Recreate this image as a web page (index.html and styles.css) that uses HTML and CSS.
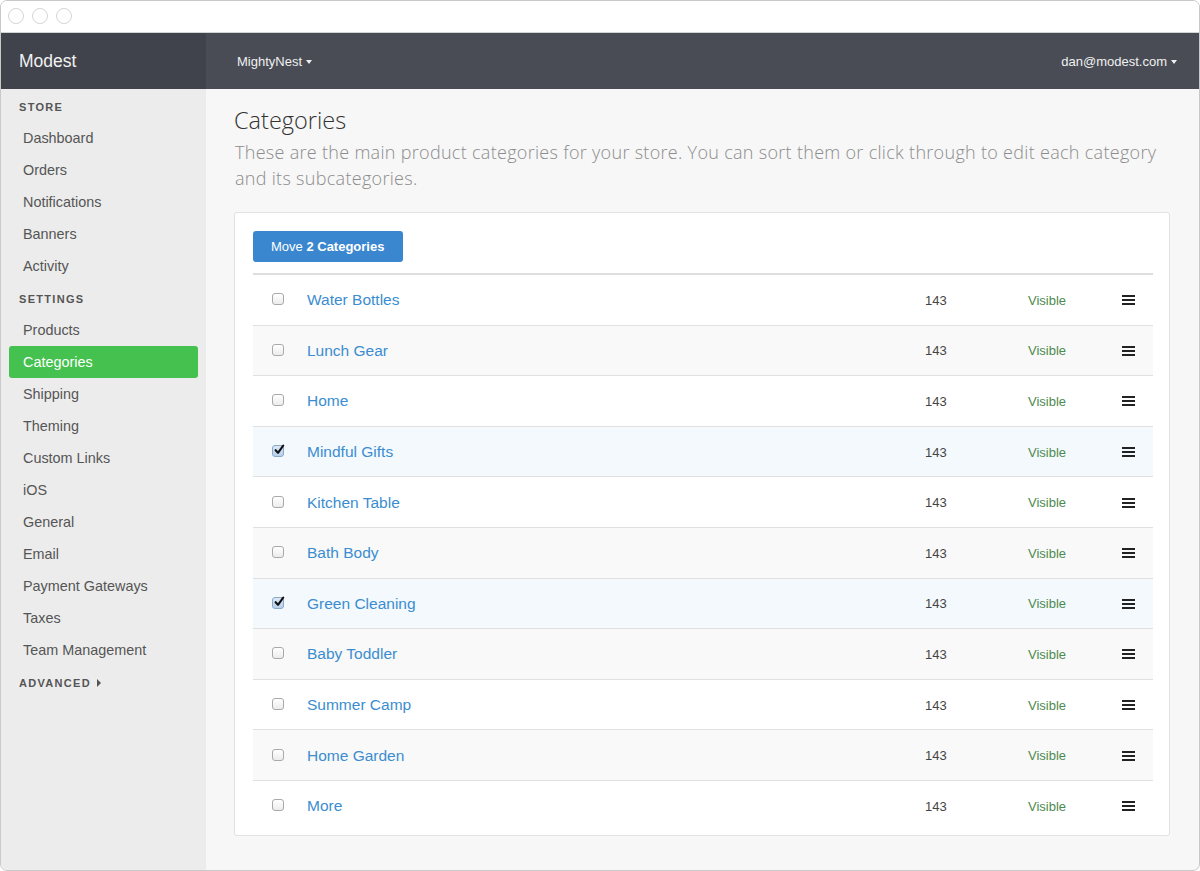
FILE: index.html
```html
<!DOCTYPE html>
<html>
<head>
<meta charset="utf-8">
<link rel="stylesheet" href="styles.css">
</head>
<body>
<div class="window">
  <div class="titlebar">
    <span class="light"></span><span class="light"></span><span class="light"></span>
  </div>
  <div class="topbar">
    <div class="brand">Modest</div>
    <div class="topnav">
      <div class="menu">MightyNest <span class="caret"></span></div>
      <div class="menu">dan@modest.com <span class="caret"></span></div>
    </div>
  </div>
  <div class="body">
    <nav class="sidebar">
      <div class="sec">STORE</div>
      <a class="item">Dashboard</a>
      <a class="item">Orders</a>
      <a class="item">Notifications</a>
      <a class="item">Banners</a>
      <a class="item">Activity</a>
      <div class="sec">SETTINGS</div>
      <a class="item">Products</a>
      <a class="item active">Categories</a>
      <a class="item">Shipping</a>
      <a class="item">Theming</a>
      <a class="item">Custom Links</a>
      <a class="item">iOS</a>
      <a class="item">General</a>
      <a class="item">Email</a>
      <a class="item">Payment Gateways</a>
      <a class="item">Taxes</a>
      <a class="item">Team Management</a>
      <div class="sec">ADVANCED <span class="rcaret"></span></div>
    </nav>
    <main class="main">
      <h1 class="title">Categories</h1>
      <p class="lead">These are the main product categories for your store. You can sort them or click through to edit each category and its subcategories.</p>
      <div class="card">
        <button class="btn">Move <b>2 Categories</b></button>
        <div class="table">
          <div class="row"><span class="cb"></span><a class="name">Water Bottles</a><span class="num">143</span><span class="vis">Visible</span><span class="ham"><i></i><i></i><i></i></span></div>
          <div class="row"><span class="cb"></span><a class="name">Lunch Gear</a><span class="num">143</span><span class="vis">Visible</span><span class="ham"><i></i><i></i><i></i></span></div>
          <div class="row"><span class="cb"></span><a class="name">Home</a><span class="num">143</span><span class="vis">Visible</span><span class="ham"><i></i><i></i><i></i></span></div>
          <div class="row sel"><span class="cb on"><svg viewBox="0 0 12 12" width="12" height="12"><path d="M2.6 6.2 L5 8.8 L10.2 1.6" fill="none" stroke="#111" stroke-width="2.1" stroke-linecap="round" stroke-linejoin="round"/></svg></span><a class="name">Mindful Gifts</a><span class="num">143</span><span class="vis">Visible</span><span class="ham"><i></i><i></i><i></i></span></div>
          <div class="row"><span class="cb"></span><a class="name">Kitchen Table</a><span class="num">143</span><span class="vis">Visible</span><span class="ham"><i></i><i></i><i></i></span></div>
          <div class="row"><span class="cb"></span><a class="name">Bath Body</a><span class="num">143</span><span class="vis">Visible</span><span class="ham"><i></i><i></i><i></i></span></div>
          <div class="row sel"><span class="cb on"><svg viewBox="0 0 12 12" width="12" height="12"><path d="M2.6 6.2 L5 8.8 L10.2 1.6" fill="none" stroke="#111" stroke-width="2.1" stroke-linecap="round" stroke-linejoin="round"/></svg></span><a class="name">Green Cleaning</a><span class="num">143</span><span class="vis">Visible</span><span class="ham"><i></i><i></i><i></i></span></div>
          <div class="row"><span class="cb"></span><a class="name">Baby Toddler</a><span class="num">143</span><span class="vis">Visible</span><span class="ham"><i></i><i></i><i></i></span></div>
          <div class="row"><span class="cb"></span><a class="name">Summer Camp</a><span class="num">143</span><span class="vis">Visible</span><span class="ham"><i></i><i></i><i></i></span></div>
          <div class="row"><span class="cb"></span><a class="name">Home Garden</a><span class="num">143</span><span class="vis">Visible</span><span class="ham"><i></i><i></i><i></i></span></div>
          <div class="row"><span class="cb"></span><a class="name">More</a><span class="num">143</span><span class="vis">Visible</span><span class="ham"><i></i><i></i><i></i></span></div>
        </div>
      </div>
    </main>
  </div>
</div>
</body>
</html>
```
FILE: styles.css
```css
* { box-sizing: border-box; }
html, body { margin: 0; padding: 0; background: #fff; }
body { font-family: "Liberation Sans", Arial, sans-serif; }

.window {
  width: 1200px;
  height: 871px;
  border: 1px solid #c9c9c9;
  border-radius: 7px;
  overflow: hidden;
  display: flex;
  flex-direction: column;
  background: #f7f7f7;
}

.titlebar {
  height: 32px;
  flex: none;
  background: #fff;
  border-bottom: 1px solid #d4d4d4;
  display: flex;
  align-items: center;
  gap: 8px;
  padding: 0 0 2px 7px;
}
.light {
  width: 16px;
  height: 16px;
  border-radius: 50%;
  border: 1px solid #d6d6d6;
  background: #fff;
}

.topbar {
  height: 56px;
  flex: none;
  display: flex;
  background: #494c55;
}
.brand {
  width: 205px;
  flex: none;
  background: #40434b;
  color: #f2f2f2;
  font-size: 17.5px;
  line-height: 56px;
  padding-left: 18px;
}
.topnav {
  flex: 1;
  display: flex;
  justify-content: space-between;
  align-items: center;
  padding: 0 22px 0 31px;
}
.menu {
  color: #f0f0f0;
  font-size: 13px;
  display: flex;
  align-items: center;
  gap: 4px;
}
.caret {
  width: 0;
  height: 0;
  border-left: 3.5px solid transparent;
  border-right: 3.5px solid transparent;
  border-top: 4px solid #f0f0f0;
  margin-top: 1px;
}

.body {
  flex: 1;
  display: flex;
  min-height: 0;
}

.sidebar {
  width: 205px;
  flex: none;
  background: #ececec;
  display: flex;
  flex-direction: column;
}
.sec {
  font-size: 11px;
  font-weight: bold;
  letter-spacing: 1.3px;
  color: #555;
  line-height: 16px;
  padding: 10px 18px 7px;
  display: flex;
  align-items: center;
  gap: 6px;
}
.item + .sec { padding-top: 9px; }
.rcaret {
  width: 0;
  height: 0;
  border-top: 4px solid transparent;
  border-bottom: 4px solid transparent;
  border-left: 4px solid #555;
}
.item {
  display: block;
  margin: 0 8px;
  padding: 0 14px;
  height: 32px;
  line-height: 32px;
  font-size: 14.4px;
  color: #555;
  border-radius: 3px;
}
.item.active {
  background: #45c14f;
  color: #fff;
}

.main {
  flex: 1;
  padding: 16px 29px 0 28px;
}
.title {
  margin: 0;
  font-family: "Open Sans", sans-serif;
  font-weight: 300;
  font-size: 23.5px;
  line-height: 30px;
  color: #333;
}
.lead {
  margin: 4px 0 21px 1px;
  font-family: "Open Sans", sans-serif;
  font-weight: 300;
  font-size: 18px;
  letter-spacing: 0.3px;
  line-height: 26px;
  color: #8c8c8c;
}

.card {
  background: #fff;
  border: 1px solid #e2e2e2;
  border-radius: 3px;
  padding: 18px 16px 4px 18px;
}
.btn {
  display: block;
  height: 31px;
  padding: 0 19px 0 18px;
  border: none;
  border-radius: 3px;
  background: #3a87cf;
  color: #fff;
  font-family: "Liberation Sans", Arial, sans-serif;
  font-size: 13px;
}
.btn b { font-weight: bold; }

.table {
  margin-top: 11px;
  border-top: 2px solid #dedede;
}
.row {
  display: grid;
  grid-template-columns: 35px 1fr 103px 94px 13px;
  align-items: center;
  height: 50.6px;
  padding: 1px 18px 0 19px;
  border-top: 1px solid #e0e0e0;
}
.row:first-child { border-top: none; height: 49.6px; }
.row:nth-child(even) { background: #f9f9f9; }
.row.sel { background: #f4f9fe; }

.cb {
  width: 12px;
  height: 12px;
  border: 1px solid #a9a9a9;
  border-radius: 3px;
  background: linear-gradient(#fff, #ececec);
  position: relative;
  top: -1px;
}
.cb.on {
  background: linear-gradient(#dbe9f7, #b6d0ea);
  border-color: #8aa7c4;
}
.cb svg { position: absolute; left: 0; top: -2px; }

.name {
  color: #3b8dd0;
  font-size: 15.5px;
}
.num {
  font-size: 13px;
  color: #444;
}
.vis {
  font-size: 13px;
  color: #4e8a4e;
}
.ham {
  display: flex;
  flex-direction: column;
  gap: 2px;
  width: 13px;
}
.ham i {
  display: block;
  height: 2px;
  background: #222;
}
```
